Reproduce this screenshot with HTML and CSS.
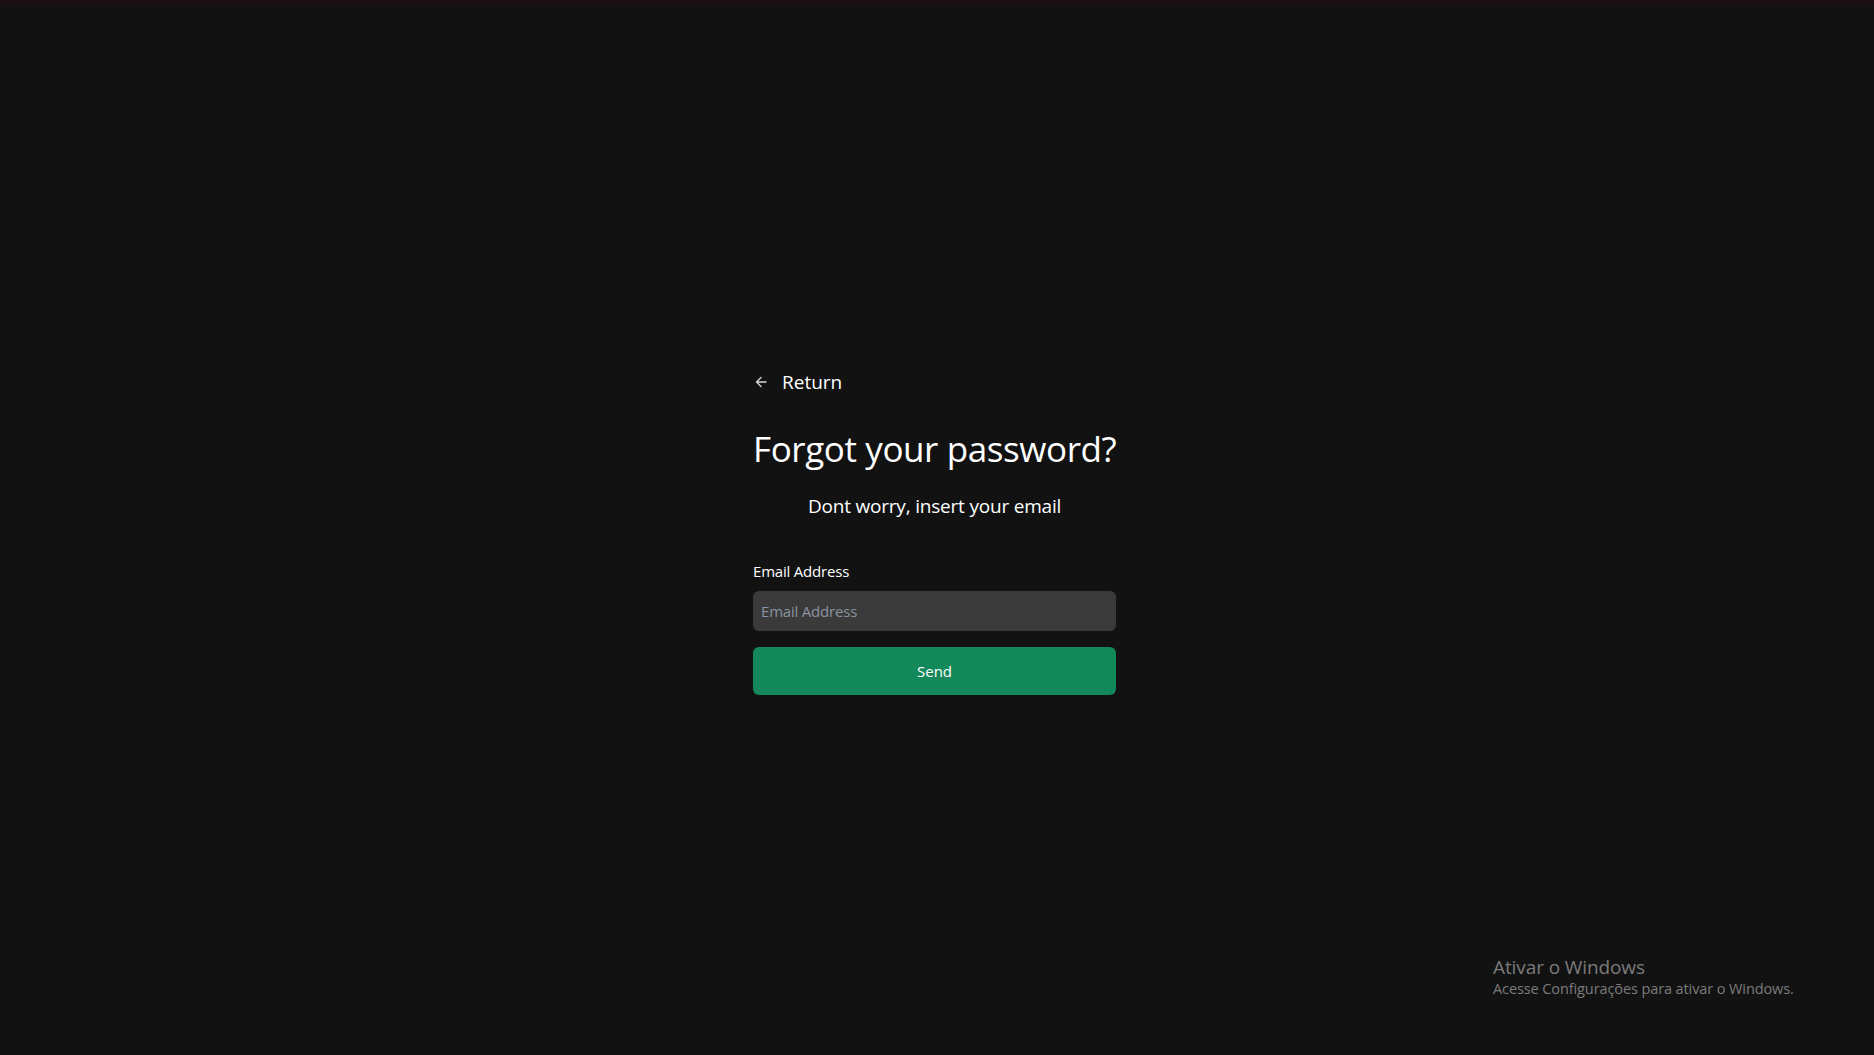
FILE: index.html
```html
<!DOCTYPE html>
<html lang="en">
<head>
<meta charset="utf-8">
<title>Forgot your password?</title>
<link rel="stylesheet" href="styles.css">
</head>
<body>
<div class="topbar"></div>
<main class="page">
  <form class="card">
    <a class="back" href="#">
      <svg class="back-icon" width="12" height="12" viewBox="0 0 12 12" fill="none" stroke="currentColor" stroke-width="1.3" stroke-linecap="round" stroke-linejoin="round"><path d="M11 6H1.5M6 1.5L1.5 6 6 10.5"/></svg>
      <span>Return</span>
    </a>
    <h1 class="title">Forgot your password?</h1>
    <p class="subtitle">Dont worry, insert your email</p>
    <label class="label" for="email">Email Address</label>
    <input class="input" id="email" type="email" placeholder="Email Address">
    <button class="btn" type="button">Send</button>
  </form>
</main>
<div class="watermark">
  <div class="wm-title">Ativar o Windows</div>
  <div class="wm-sub">Acesse Configurações para ativar o Windows.</div>
</div>
</body>
</html>
```
FILE: styles.css
```css
* { box-sizing: border-box; }
html, body { margin: 0; padding: 0; }
body {
  background: #121212;
  color: #ffffff;
  font-family: "Open Sans", "Noto Sans", sans-serif;
  height: 100vh;
  overflow: hidden;
  display: flex;
  flex-direction: column;
}
.topbar {
  height: 4px;
  background: #1c0f14;
  flex: none;
}
.page {
  flex: 1;
  display: flex;
  align-items: center;
  justify-content: center;
  padding-top: 6px;
  padding-right: 5px;
}
.card {
  width: 363px;
  display: flex;
  flex-direction: column;
}
.back {
  display: flex;
  align-items: center;
  gap: 15px;
  height: 24px;
  padding-left: 2px;
  color: #ffffff;
  text-decoration: none;
  font-size: 19px;
  line-height: 24px;
}
.back-icon { color: #d8d8d8; }
.title {
  margin: 33px 0 0;
  font-size: 35px;
  font-weight: 400;
  line-height: 44px;
  white-space: nowrap;
  letter-spacing: -0.4px;
}
.subtitle {
  margin: 21px 0 0;
  font-size: 19px;
  line-height: 28px;
  text-align: center;
  letter-spacing: -0.2px;
}
.label {
  margin-top: 39px;
  font-size: 15px;
  line-height: 24px;
  letter-spacing: -0.2px;
}
.input {
  margin-top: 8px;
  height: 40px;
  border: none;
  border-radius: 6px;
  background: #3a3a3a;
  padding: 0 8px;
  font-family: inherit;
  font-size: 15px;
  color: #ffffff;
  outline: none;
  letter-spacing: -0.2px;
}
.input::placeholder { color: #8a93a3; }
.btn {
  margin-top: 16px;
  height: 48px;
  border: none;
  border-radius: 6px;
  background: #13885a;
  color: #ffffff;
  font-family: inherit;
  font-size: 15px;
  cursor: pointer;
}
.watermark {
  position: absolute;
  left: 1493px;
  top: 955px;
  color: #7b7b7b;
  font-family: "Open Sans", "Noto Sans", sans-serif;
}
.wm-title { font-size: 19px; line-height: 24px; letter-spacing: -0.1px; }
.wm-sub { font-size: 14.5px; line-height: 20px; letter-spacing: -0.1px; }
```
